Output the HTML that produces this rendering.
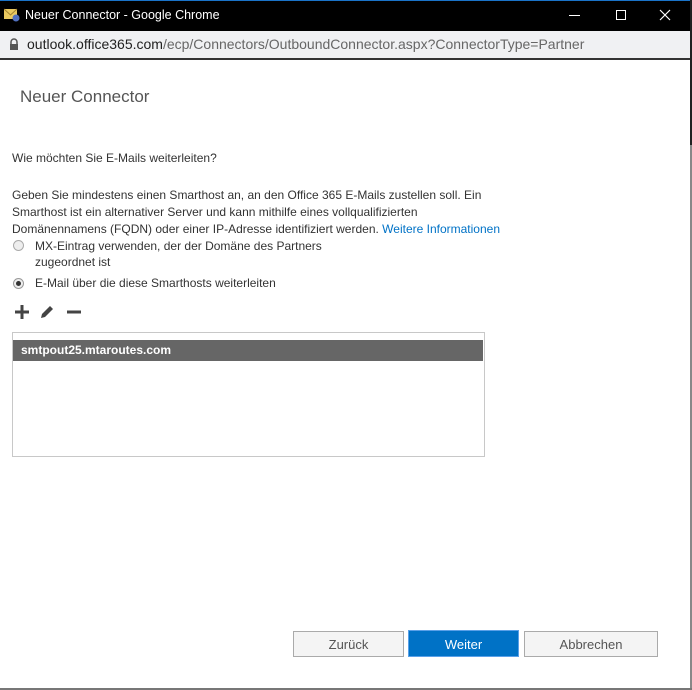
<!DOCTYPE html>
<html><head><meta charset="utf-8"><style>
*{margin:0;padding:0;box-sizing:border-box}
body{width:692px;height:690px;overflow:hidden;background:#fff;font-family:"Liberation Sans",sans-serif;position:relative;color:#333}
.a{position:absolute;white-space:nowrap}
</style></head><body>
<div class="a" style="left:0;top:0;width:692px;height:31px;background:#000;border-top:1px solid #1a73c8"></div>
<svg class="a" style="left:4px;top:8px" width="16" height="14"><rect x="0" y="1" width="13" height="10" fill="#e8c860"/><path d="M0 1 L6.5 7 L13 1" stroke="#a08030" fill="none"/><circle cx="12" cy="10" r="3.5" fill="#5070c0"/></svg>
<div class="a" style="left:25px;top:8px;color:#fff;font-size:12.5px">Neuer Connector - Google Chrome</div>
<div class="a" style="left:569px;top:15px;width:11px;height:1px;background:#fff"></div>
<div class="a" style="left:616px;top:10px;width:10px;height:10px;border:1px solid #fff"></div>
<svg class="a" style="left:659px;top:9px" width="12" height="12"><path d="M1 1L11 11M11 1L1 11" stroke="#fff" stroke-width="1.2"/></svg>
<div class="a" style="left:0;top:31px;width:690px;height:27px;background:#f0f1f3"></div>
<svg class="a" style="left:9px;top:38px" width="10" height="12"><path d="M2 6V4a3 3 0 0 1 6 0v2" stroke="#555" fill="none" stroke-width="1.5"/><rect x="1" y="6" width="8" height="6" fill="#555"/></svg>
<div class="a" style="left:27px;top:36px;font-size:14px;color:#1f1f1f">outlook.office365.com<span style="color:#666">/ecp/Connectors/OutboundConnector.aspx?ConnectorType=Partner</span></div>
<div class="a" style="left:0;top:58px;width:690px;height:2px;background:#333"></div>
<div class="a" style="left:690px;top:0;width:2px;height:145px;background:#222"></div>
<div class="a" style="left:690px;top:145px;width:2px;height:545px;background:#888"></div>
<div class="a" style="left:0;top:688px;width:692px;height:2px;background:#777"></div>
<div class="a" style="left:20px;top:87px;font-size:17px;color:#555;font-weight:300">Neuer Connector</div>
<div class="a" style="left:12px;top:151px;font-size:12px">Wie möchten Sie E-Mails weiterleiten?</div>
<div class="a" style="left:12px;top:187px;font-size:12px;line-height:17px">Geben Sie mindestens einen Smarthost an, an den Office 365 E-Mails zustellen soll. Ein<br>Smarthost ist ein alternativer Server und kann mithilfe eines vollqualifizierten<br>Domänennamens (FQDN) oder einer IP-Adresse identifiziert werden. <span style="color:#0072c6">Weitere Informationen</span></div>
<div class="a" style="left:13px;top:240px;width:11px;height:11px;border-radius:50%;border:1px solid #aaa;background:#eee"></div>
<div class="a" style="left:35px;top:238px;font-size:12px;line-height:16px">MX-Eintrag verwenden, der der Domäne des Partners<br>zugeordnet ist</div>
<div class="a" style="left:13px;top:278px;width:11px;height:11px;border-radius:50%;border:1px solid #999;background:#eee"></div>
<div class="a" style="left:16px;top:281px;width:5px;height:5px;border-radius:50%;background:#333"></div>
<div class="a" style="left:35px;top:276px;font-size:12px">E-Mail über die diese Smarthosts weiterleiten</div>
<svg class="a" style="left:13px;top:303px" width="70" height="18"><path d="M2 9H16M9 2V16" stroke="#444" stroke-width="3"/><path d="M28 15L29 11L37 3L40 6L32 14Z" fill="#444"/><path d="M54 9H68" stroke="#444" stroke-width="3"/></svg>
<div class="a" style="left:12px;top:332px;width:473px;height:125px;border:1px solid #c8c8c8"></div>
<div class="a" style="left:13px;top:340px;width:470px;height:21px;background:#666;color:#fff;font-size:12px;font-weight:bold;padding:3px 0 0 8px">smtpout25.mtaroutes.com</div>
<div class="a" style="left:293px;top:631px;width:111px;height:26px;border:1px solid #aaa;background:#f4f4f4;font-size:13px;color:#555;text-align:center;line-height:26px">Zurück</div>
<div class="a" style="left:408px;top:630px;width:111px;height:27px;border:1px solid #5aa0e8;background:#0072c6;font-size:13px;color:#fff;text-align:center;line-height:27px">Weiter</div>
<div class="a" style="left:524px;top:631px;width:134px;height:26px;border:1px solid #aaa;background:#f4f4f4;font-size:13px;color:#555;text-align:center;line-height:26px">Abbrechen</div>
</body></html>
